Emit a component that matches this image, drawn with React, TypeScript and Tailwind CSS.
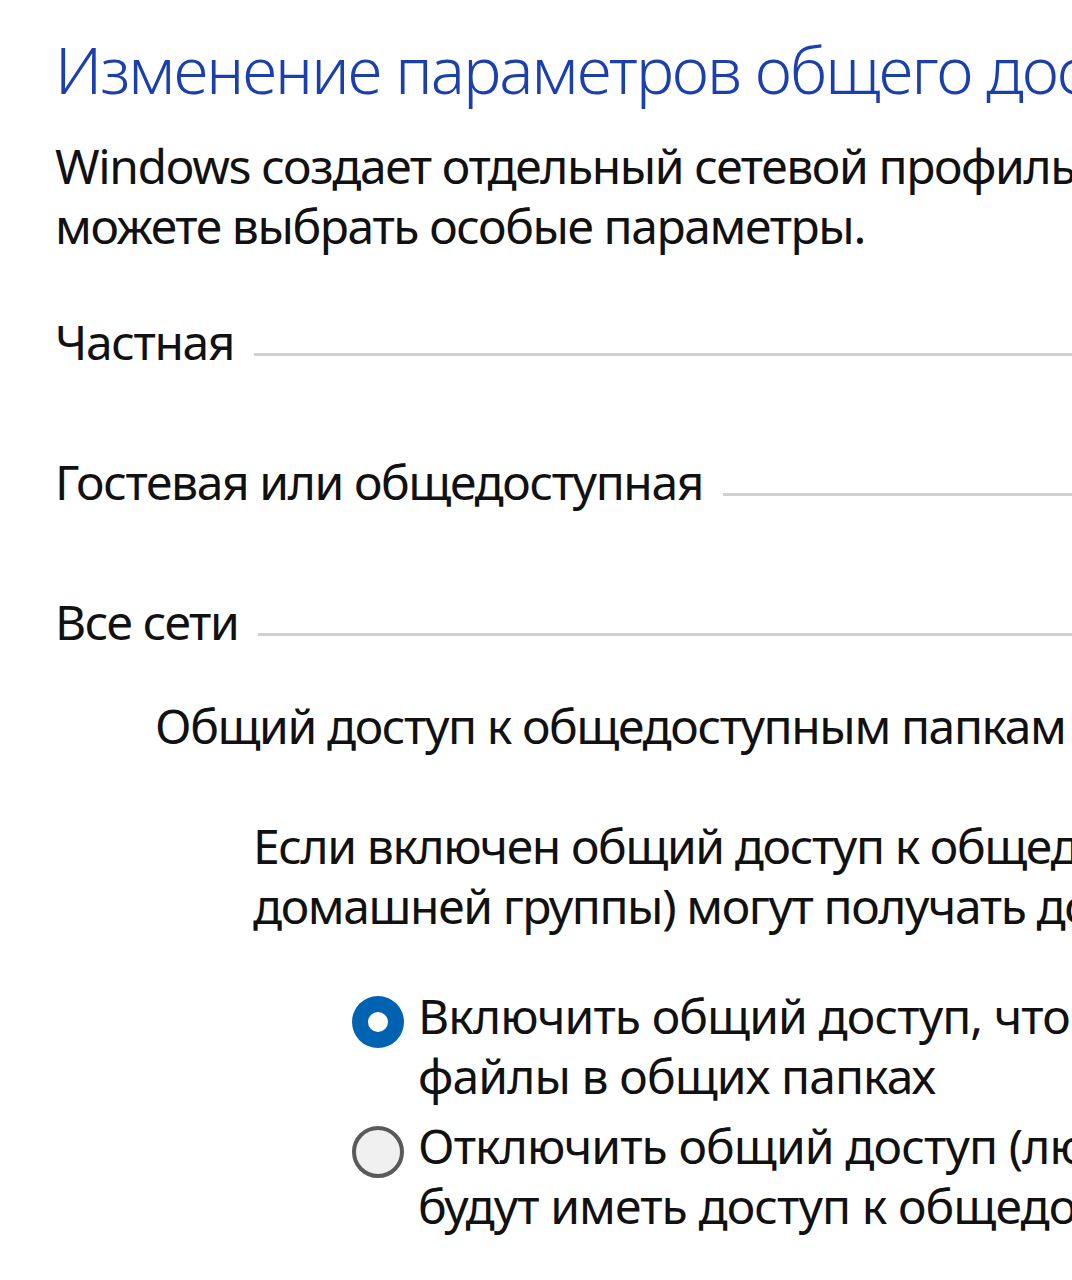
import React, { useState } from 'react';

const font = { fontFamily: '"Noto Sans", "Open Sans", sans-serif' };

interface SectionHeaderProps {
  label: string;
}

const SectionHeader: React.FC<SectionHeaderProps> = ({ label }) => (
  <div className="flex items-center h-[60px]">
    <span className="whitespace-nowrap text-[#111]">{label}</span>
    <div className="ml-5 mt-[24px] h-[3px] flex-1 bg-[#d0d0d0]" />
  </div>
);

interface RadioProps {
  checked: boolean;
  onClick: () => void;
  lines: string[];
}

const Radio: React.FC<RadioProps> = ({ checked, onClick, lines }) => (
  <div className="flex items-start cursor-pointer" onClick={onClick}>
    <div className="mt-[10px] mr-[14px] shrink-0">
      {checked ? (
        <div className="h-[52px] w-[52px] rounded-full bg-[#0063b1] flex items-center justify-center">
          <div className="h-[20px] w-[20px] rounded-full bg-white" />
        </div>
      ) : (
        <div className="h-[52px] w-[52px] rounded-full border-[4px] border-[#5a5a5a] bg-[#f0f0f0]" />
      )}
    </div>
    <div className="leading-[60px] tracking-[-0.9px]">
      {lines.map((l) => (
        <div key={l} className="whitespace-nowrap">{l}</div>
      ))}
    </div>
  </div>
);

export default function App() {
  const [shared, setShared] = useState(true);

  return (
    <div className="w-[1072px] h-[1280px] overflow-hidden bg-white text-[48px] text-[#111] leading-[60px] tracking-[-1.4px]" style={font}>
      <div className="pl-[55px] pt-[30px]">
        <h1 className="whitespace-nowrap text-[64px] font-light leading-[80px] tracking-[-1.8px] text-[#1c3fae]">
          Изменение параметров общего доступа для различных сетевых профилей
        </h1>

        <div className="mt-[26px]">
          <div className="whitespace-nowrap">Windows создает отдельный сетевой профиль для каждой используемой сети. Для каждого профиля вы</div>
          <div className="whitespace-nowrap">можете выбрать особые параметры.</div>
        </div>

        <div className="mt-[56px] space-y-[80px]">
          <SectionHeader label="Частная" />
          <SectionHeader label="Гостевая или общедоступная" />
          <SectionHeader label="Все сети" />
        </div>

        <div className="pl-[100px] mt-[44px]">
          <div className="whitespace-nowrap">Общий доступ к общедоступным папкам</div>

          <div className="pl-[98px] mt-[60px]">
            <div className="whitespace-nowrap">Если включен общий доступ к общедоступным папкам, пользователи сети (включая членов</div>
            <div className="whitespace-nowrap">домашней группы) могут получать доступ к файлам в общедоступных папках.</div>

            <div className="pl-[99px] mt-[50px] space-y-[10px]">
              <Radio
                checked={shared}
                onClick={() => setShared(true)}
                lines={['Включить общий доступ, чтобы сетевые пользователи могли читать и записывать', 'файлы в общих папках']}
              />
              <Radio
                checked={!shared}
                onClick={() => setShared(false)}
                lines={['Отключить общий доступ (любые пользователи, вошедшие в систему на этом компьютере,', 'будут иметь доступ к общедоступным папкам)']}
              />
            </div>
          </div>
        </div>
      </div>
    </div>
  );
}
